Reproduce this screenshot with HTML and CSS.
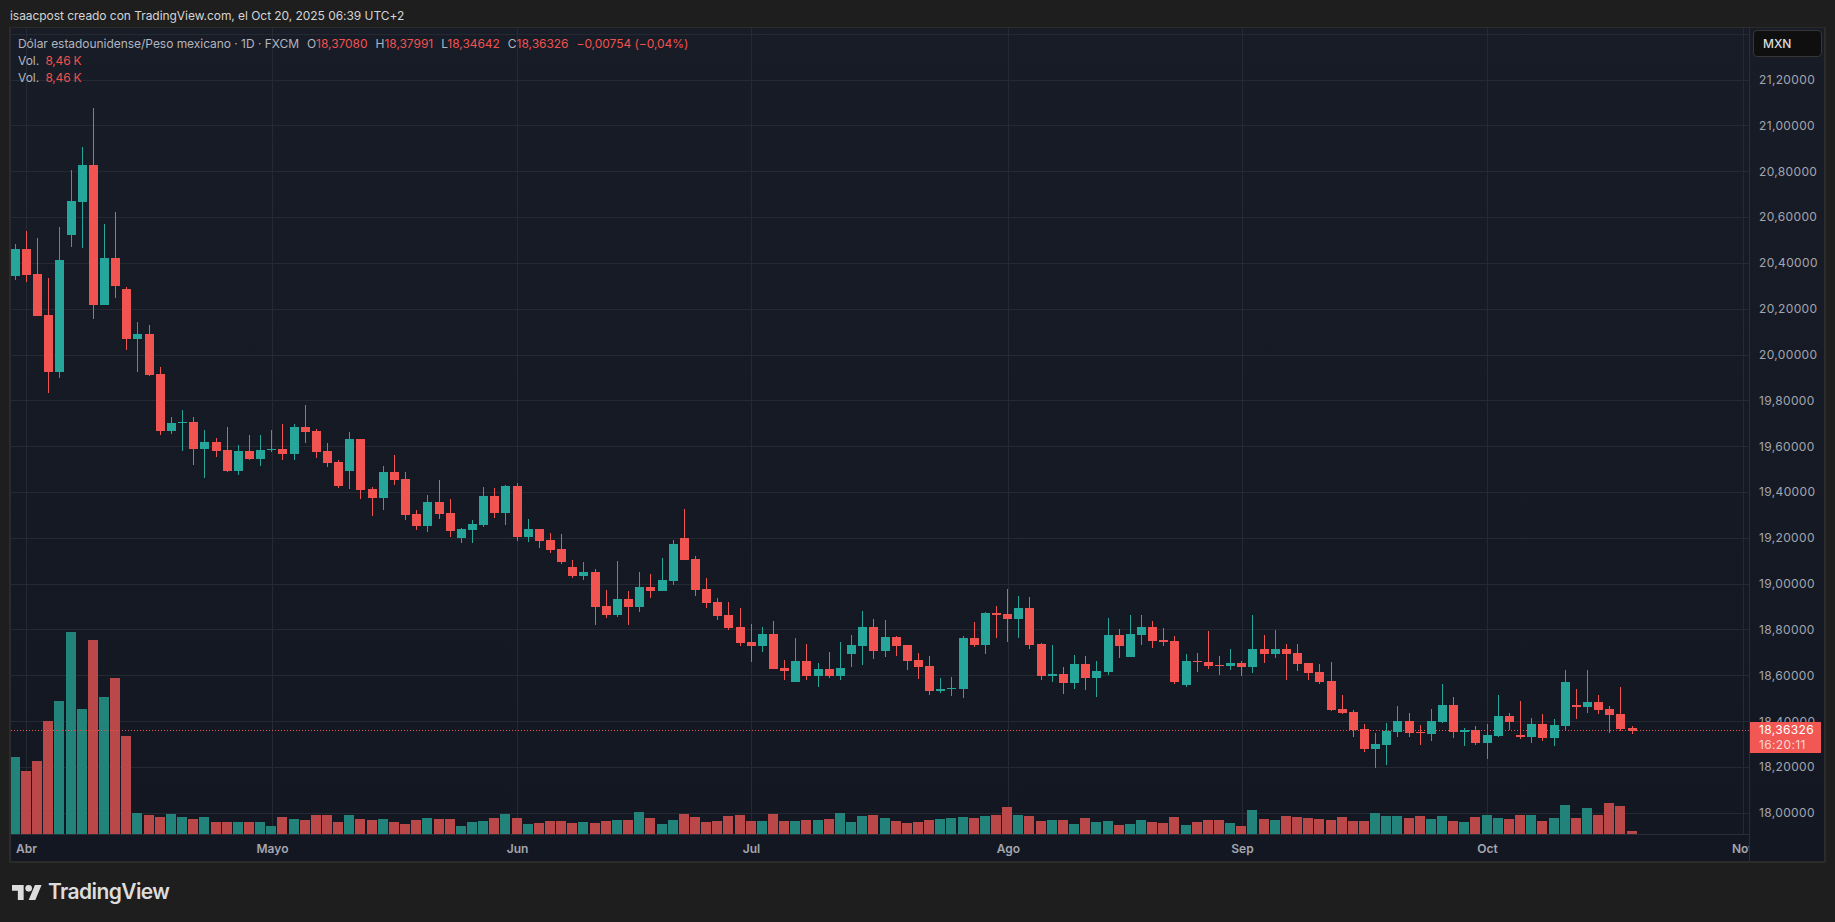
FILE: index.html
```html
<!DOCTYPE html>
<html lang="es">
<head>
<meta charset="utf-8">
<title>USD/MXN - TradingView</title>
<link rel="stylesheet" href="styles.css">
</head>
<body>
<header class="byline">isaacpost creado con TradingView.com, el Oct 20, 2025 06:39 UTC+2</header>
<main class="frame">
  <section class="pane">
    <svg id="chart" class="plot" viewBox="11 28 1738 806" aria-label="Gráfico de velas USD/MXN"></svg>
    <div class="legend">
      <div class="legend-row">
        <span class="title">Dólar estadounidense/Peso mexicano · 1D · FXCM</span>
        <span class="ohlc">O<b>18,37080</b></span>
        <span class="ohlc">H<b>18,37991</b></span>
        <span class="ohlc">L<b>18,34642</b></span>
        <span class="ohlc">C<b>18,36326</b></span>
        <b class="change">−0,00754 (−0,04%)</b>
      </div>
      <div class="legend-row vol">Vol. <b>8,46 K</b></div>
      <div class="legend-row vol">Vol. <b>8,46 K</b></div>
    </div>
  </section>
  <aside class="price-axis">
    <button class="currency">MXN</button>
    <ul class="prices">
      <li>21,20000</li><li>21,00000</li><li>20,80000</li><li>20,60000</li><li>20,40000</li><li>20,20000</li>
      <li>20,00000</li><li>19,80000</li><li>19,60000</li><li>19,40000</li><li>19,20000</li><li>19,00000</li>
      <li>18,80000</li><li>18,60000</li><li>18,40000</li><li>18,20000</li><li>18,00000</li>
    </ul>
    <div class="last-price"><span>18,36326</span><small>16:20:11</small></div>
  </aside>
  <nav class="time-axis">
    <span>Abr</span><span>Mayo</span><span>Jun</span><span>Jul</span><span>Ago</span><span>Sep</span><span>Oct</span><span>Nov</span>
  </nav>
</main>
<footer class="brand">
  <svg class="logo" viewBox="0 4 36 18" aria-hidden="true"><path d="M14 22H7V11H0V4h14v18zM28 22h-8l7.5-18h8L28 22z"/><circle cx="20" cy="8" r="4"/></svg>
  <span class="wordmark">TradingView</span>
</footer>
<script src="chart.js"></script>
</body>
</html>
```
FILE: styles.css
```css
* { box-sizing: border-box; }
html, body { margin: 0; height: 100%; }
body {
  width: 1835px;
  height: 922px;
  overflow: hidden;
  background: #1e1e1e;
  font-family: Inter, "Liberation Sans", sans-serif;
  color: #d1d4dc;
}
.byline {
  height: 27px;
  padding: 9px 0 0 10px;
  font-size: 12px;
  line-height: 13px;
  letter-spacing: -.05px;
  color: #d4d4d4;
}
.frame {
  width: 1817px;
  height: 836px;
  margin-left: 9px;
  border: 2px solid #2b2b2b;
  border-top-width: 1px;
  display: grid;
  grid-template-columns: 1738px 1fr;
  grid-template-rows: 806px 1fr;
  background: linear-gradient(#181c27, #131722);
  overflow: hidden;
}
.pane { position: relative; overflow: hidden; }
.plot { display: block; width: 1738px; height: 806px; }
.legend {
  position: absolute;
  left: 7px;
  top: 7px;
  font-size: 12px;
  line-height: 17px;
  letter-spacing: -.04px;
  color: #b2b5be;
}
.legend-row { display: flex; white-space: pre; height: 17px; }
.legend-row b { font-weight: 400; color: #f0524f; }
.ohlc { margin-left: 8px; }
.change { margin-left: 8px; }
.vol b { margin-left: 3px; letter-spacing: -.2px; }
.price-axis {
  position: relative;
  grid-row: 1 / 3;
  grid-column: 2;
  border-left: 1px solid #2a2e39;
}
.currency {
  position: absolute;
  left: 3px;
  top: 2px;
  width: 69px;
  height: 27px;
  padding: 0 0 0 9px;
  text-align: left;
  background: #0f0f0f;
  border: 1px solid #363636;
  border-radius: 4px;
  color: #dbdbdb;
  font: 500 12px Inter, "Liberation Sans", sans-serif;
}
.prices {
  list-style: none;
  margin: 0;
  padding: 29px 0 0 9px;
  font-size: 12px;
  letter-spacing: .35px;
  color: #a3a6af;
}
.prices li { height: 45.83px; line-height: 45.83px; }
.last-price {
  position: absolute;
  left: 0;
  top: 694px;
  width: 71px;
  height: 31px;
  padding: 1px 0 0 9px;
  background: #f15854;
  color: #fff;
  font-size: 12px;
  letter-spacing: .35px;
  line-height: 14.5px;
  display: flex;
  flex-direction: column;
}
.last-price small { font-size: 12px; color: #fbd4d3; }
.time-axis {
  grid-row: 2;
  grid-column: 1;
  border-top: 1px solid #2a2e39;
  padding-left: 15.5px;
  display: grid;
  grid-template-columns: 246px 245px 234px 257px 234px 245px 256px 30px;
  align-items: center;
  overflow: hidden;
  font-size: 12px;
  font-weight: 600;
  color: #a3a6af;
}
.time-axis span { justify-self: start; transform: translateX(-50%); }
.brand {
  display: flex;
  align-items: center;
  gap: 6px;
  padding: 17px 0 0 12px;
  color: #dcdcdc;
}
.logo { width: 30px; height: 15px; fill: currentColor; }
.wordmark {
  font: 600 21px/24px Inter, "Liberation Sans", sans-serif;
  letter-spacing: -.6px;
}
```
FILE: chart.js
```js
var G = 1, R = 0;
/* [colour, wick top, body top, body bottom, wick bottom] read at 3x, base + v / 3 */
var segments = [
  [90, [[G,462,477,558,570],[R,423,477,555,576],[R,444,552,678,678],[R,564,675,846,909],[G,411,510,846,864],[G,240,333,435,471],[G,171,225,336,474],[R,54,225,645,687],[G,402,504,645,645],[R,366,504,588,624],[R,591,597,747,780],[G,696,732,747,846],[R,705,732,855,858],[R,831,852,1023,1035],[G,981,999,1023,1032],[G,960,996,999,1083],[R,981,996,1077,1125],[G,1020,1056,1077,1164],[R,1044,1056,1083,1101],[R,1011,1080,1143,1146],[G,1065,1083,1143,1155],[R,1035,1083,1107,1110],[G,1035,1080,1107,1128],[G,1020,1077,1080,1086],[R,1002,1077,1092,1110],[G,1002,1011,1092,1110],[R,945,1011,1026,1059],[R,1017,1023,1086,1104]]],
  [380, [[R,189,213,249,261],[R,240,246,318,324],[G,156,177,273,327],[R,177,177,330,357],[R,321,327,354,408],[G,258,276,354,390],[R,225,276,300,315],[R,276,297,405,420],[R,390,402,438,450],[G,345,366,438,456],[R,300,366,402,417],[R,357,399,453,471],[G,444,447,474,489],[G,420,432,450,489],[G,321,348,435,441],[R,324,348,399,414],[G,315,318,399,435],[R,309,318,471,483],[G,417,447,471,486],[R,447,447,483,504],[R,459,480,510,519],[R,462,507,546,552],[R,540,561,588,594],[G,546,576,588,600],[R,567,576,681,735],[R,630,678,705,714],[G,543,657,705,711],[R,633,657,681,735],[G,576,621,681,696],[R,582,621,633,654],[G,534,600,633,633],[G,480,492,603,615],[R,387,474,540,540],[R,528,537,630,648],[R,594,627,669,684],[R,654,666,708,720],[R,666,705,744,750],[R,684,741,789,798]]],
  [560, [[R,192,246,258,306],[G,201,222,258,276],[R,183,222,327,327],[R,300,324,333,360],[G,234,303,366,366],[R,252,303,348,360],[G,309,327,348,381],[R,276,327,348,354],[G,246,324,348,360],[G,225,255,282,321],[G,153,201,258,315],[R,177,201,273,297],[G,180,231,273,291],[R,228,231,258,288],[R,255,255,303,330],[R,279,300,321,357],[R,288,318,393,405],[G,354,387,393,399],[G,351,384,387,408],[G,228,234,387,414],[R,186,234,255,261],[G,156,159,255,282],[R,138,159,165,234],[R,87,162,177,246],[G,108,144,177,234],[R,111,144,255,267],[R,249,252,348,360],[G,255,342,348,366],[R,321,342,369,402],[G,285,312,369,387],[R,288,312,354,390],[G,303,333,354,411],[G,174,225,336,345],[R,207,225,258,294],[G,165,222,291,291],[G,165,201,225,255],[R,183,201,243,264],[R,204,240,246,258],[R,228,243,366,372]]],
  [590, [[G,192,213,285,291],[R,189,213,216,246],[R,123,216,228,237],[R,198,225,228,255],[G,177,219,228,240],[R,213,219,231,258],[G,75,177,231,249],[R,135,177,192,219],[G,120,177,192,204],[R,162,177,192,270],[R,162,189,222,243],[R,219,219,249,270],[R,222,246,276,282],[R,216,273,360,363],[R,315,357,369,372],[R,360,366,420,441],[R,402,417,477,486],[G,429,462,477,534],[G,399,423,465,525],[G,348,393,426,441],[R,369,393,429,441],[R,405,426,429,465],[G,357,393,432,453],[G,282,345,396,399],[R,321,345,426,444],[G,414,420,426,468],[R,408,420,459,465],[G,402,435,459,507],[G,315,378,438,441],[R,369,378,396,420],[R,333,435,441,447],[G,384,402,441,459],[R,372,402,444,453],[G,387,405,444,468],[G,240,276,408,423],[R,297,345,351,387],[G,240,336,351,369],[R,315,336,360,372],[R,348,357,375,429],[R,291,372,417,423],[R,408,414,423,432]]]
];
/* volume bar tops, read at 3x: first 29 from base 620, the rest from base 790 */
var volA = [411,453,423,303,243,36,267,60,231,174,348,579,585,591,582,591,597,591,606,606,606,606,606,618,591,597,600,585,585];
var volB = [96,75,87,90,87,96,102,90,84,87,87,108,96,93,84,72,84,102,99,93,93,99,96,99,93,90,90,66,84,102,90,72,81,96,93,78,75,93,93,72,93,93,90,90,87,69,96,78,75,84,93,99,96,90,87,84,81,84,78,75,51,75,78,93,90,90,102,84,96,93,105,102,90,96,99,81,105,96,90,90,99,108,60,87,90,78,81,84,87,90,81,93,93,69,78,78,84,78,87,78,93,96,81,75,84,87,75,75,93,84,45,84,54,75,39,48,123];

var candles = [];
segments.forEach(function (s) {
  s[1].forEach(function (c) {
    candles.push({ up: c[0] === G, hi: s[0] + c[1] / 3, top: s[0] + c[2] / 3, bot: s[0] + c[3] / 3, lo: s[0] + c[4] / 3 });
  });
});
var GRID_X = [26.5, 272.5, 517.5, 751.5, 1008.5, 1242.5, 1487.5, 1743.5];
var out = [];
function rect(x, y, w, h, fill) {
  out.push('<rect x="' + x + '" y="' + y.toFixed(1) + '" width="' + w + '" height="' + h.toFixed(1) + '" fill="' + fill + '"/>');
}
for (var n = 0; n < 18; n++) {
  var gy = Math.floor(34.2 + n * 45.83) + 0.5;
  out.push('<line x1="11" x2="1749" y1="' + gy + '" y2="' + gy + '" stroke="#252932"/>');
}
GRID_X.forEach(function (gx) {
  out.push('<line y1="28" y2="834" x1="' + gx + '" x2="' + gx + '" stroke="#252932"/>');
});
candles.forEach(function (c, i) {
  var cx = Math.floor(15.3 + 11.15 * i) + 0.5;
  var top = i < volA.length ? 620 + volA[i] / 3 : 790 + volB[i - volA.length] / 3;
  rect(cx - 5.5, top, 10, 834 - top, c.up ? '#22837b' : '#bb4848');
});
out.push('<line x1="11" x2="1749" y1="730.5" y2="730.5" stroke="#ef5350" stroke-dasharray="1 2"/>');
candles.forEach(function (c, i) {
  var cx = Math.floor(15.3 + 11.15 * i) + 0.5;
  var col = c.up ? '#26a69a' : '#f05350';
  rect(cx - 0.5, c.hi, 1, c.lo - c.hi, col);
  rect(cx - 4.5, c.top, 9, Math.max(c.bot - c.top, 1), col);
});
document.getElementById('chart').innerHTML = out.join('');
```
